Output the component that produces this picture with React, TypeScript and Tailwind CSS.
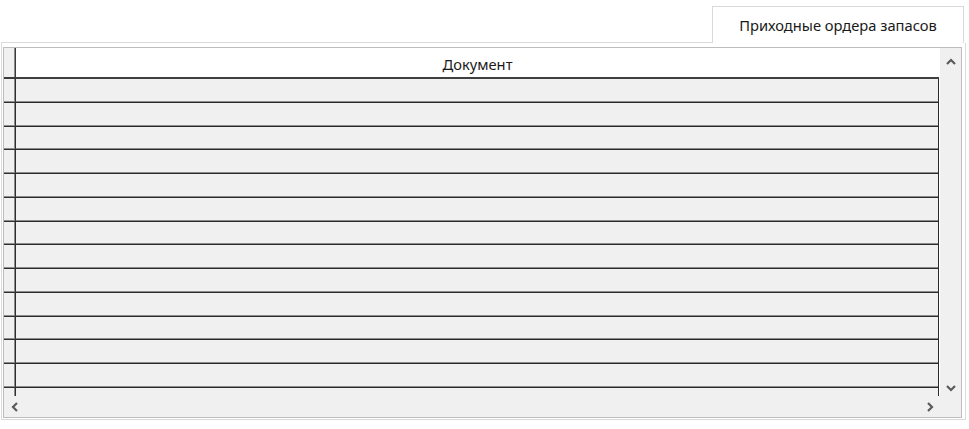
import React from "react";

const ROWS = 14;

const Chevron = ({ dir }: { dir: "up" | "down" | "left" | "right" }) => {
  const points = {
    up: "1,6 5,2 9,6",
    down: "1,2 5,6 9,2",
    left: "6,1 2,5 6,9",
    right: "2,1 6,5 2,9",
  }[dir];
  const vertical = dir === "up" || dir === "down";
  return (
    <svg
      width={vertical ? 10 : 8}
      height={vertical ? 8 : 10}
      viewBox={vertical ? "0 0 10 8" : "0 0 8 10"}
      fill="none"
    >
      <polyline points={points} stroke="#5a5a5a" strokeWidth="2.2" />
    </svg>
  );
};

export default function App() {
  return (
    <div
      className="w-[969px] h-[429px] bg-white text-[#1a1a1a] text-[14.7px] leading-none overflow-hidden"
      style={{ fontFamily: '"Noto Sans", "DejaVu Sans", sans-serif' }}
    >
      {/* Tabs */}
      <div className="flex h-[43px] items-end pl-[1px]">
        <div className="flex-1 h-px bg-[#dadada] self-end" />
        <div className="w-[252px] h-[37px] mr-[5px] border border-b-0 border-[#d9d9d9] bg-white flex items-center justify-center pt-[1px]">
          Приходные ордера запасов
        </div>
      </div>

      {/* Panel */}
      <div className="ml-[1px] w-[965px] h-[377px] border border-t-0 border-[#dadada] pt-[4px] pl-[1px] pr-[2px]">
        <div className="w-[959px] h-[371px] border border-[#bdbdbd] flex flex-col">
          <div className="flex flex-1 min-h-0">
            {/* Grid viewport */}
            <div className="w-[936px] overflow-hidden flex flex-col">
              <div className="flex h-[31px] shrink-0">
                <div className="w-[12px] bg-[#f0f0f0] border-r border-b-2 border-[#3a3a3a] shadow-[inset_-1px_0_0_#8c8c8c]" />
                <div className="w-[923px] border-b-2 border-[#3f3f3f] bg-white flex items-center justify-center pt-[3px]">
                  Документ
                </div>
                <div className="flex-1 bg-white" />
              </div>
              {Array.from({ length: ROWS }).map((_, i) => (
                <div key={i} className="flex h-[23.77px] shrink-0">
                  <div className="w-[12px] bg-[#f0f0f0] border-r border-b border-[#2e2e2e] shadow-[inset_-1px_-1px_0_#8c8c8c]" />
                  <div className="w-[923px] bg-[#f0f0f0] border-r border-b border-[#2a2a2a] shadow-[inset_0_-1px_0_#8c8c8c]" />
                  <div className="flex-1 bg-white" />
                </div>
              ))}
            </div>

            {/* Vertical scrollbar */}
            <div className="w-[21px] bg-[#f0f0f0] flex flex-col items-center justify-between pt-[10px] pb-[4px]">
              <Chevron dir="up" />
              <Chevron dir="down" />
            </div>
          </div>

          {/* Horizontal scrollbar */}
          <div className="h-[21px] flex shrink-0">
            <div className="w-[936px] bg-[#f0f0f0] flex items-center justify-between pl-[7px] pr-[6px]">
              <Chevron dir="left" />
              <Chevron dir="right" />
            </div>
            <div className="w-[21px] bg-[#f0f0f0]" />
          </div>
        </div>
      </div>
    </div>
  );
}
